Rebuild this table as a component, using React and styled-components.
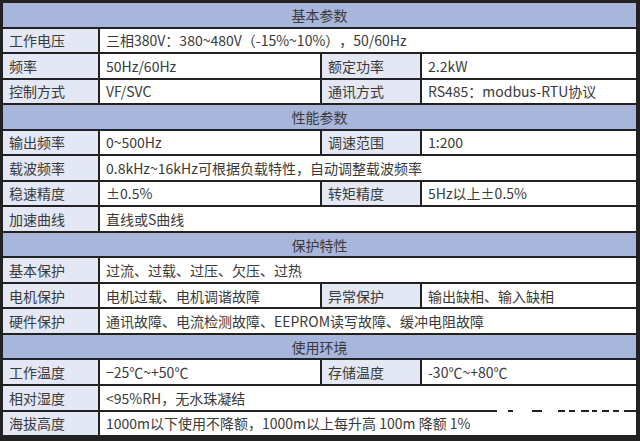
import styled, { createGlobalStyle } from 'styled-components';

const GlobalStyle = createGlobalStyle`
    html, body {
        margin: 0;
        padding: 0;
        background: #222;
    }
    body {
        font-family: "Noto Sans CJK SC", "Noto Sans", sans-serif;
        text-spacing-trim: space-all;
    }
`;

const sections = [
    {
        title: '基本参数',
        rows: [
            ['工作电压', '三相380V：380~480V（-15%~10%），50/60Hz'],
            ['频率', '50Hz/60Hz', '额定功率', '2.2kW'],
            ['控制方式', 'VF/SVC', '通讯方式', 'RS485：modbus-RTU协议'],
        ],
    },
    {
        title: '性能参数',
        rows: [
            ['输出频率', '0~500Hz', '调速范围', '1:200'],
            ['载波频率', '0.8kHz~16kHz可根据负载特性，自动调整载波频率'],
            ['稳速精度', '±0.5%', '转矩精度', '5Hz以上±0.5%'],
            ['加速曲线', '直线或S曲线'],
        ],
    },
    {
        title: '保护特性',
        rows: [
            ['基本保护', '过流、过载、过压、欠压、过热'],
            ['电机保护', '电机过载、电机调谐故障', '异常保护', '输出缺相、输入缺相'],
            ['硬件保护', '通讯故障、电流检测故障、EEPROM读写故障、缓冲电阻故障'],
        ],
    },
    {
        title: '使用环境',
        rows: [
            ['工作温度', '−25℃~+50℃', '存储温度', '-30℃~+80℃'],
            ['相对湿度', '<95%RH，无水珠凝结'],
            ['海拔高度', '1000m以下使用不降额，1000m以上每升高 100m 降额 1%'],
        ],
    },
];

function SpecTable() {
    return (
        <Table>
            {sections.map((section) => (
                <Section key={section.title}>
                    <SectionTitle>{section.title}</SectionTitle>
                    {section.rows.map((row) => (
                        <Row key={row[0]} $split={row.length === 4}>
                            {row.map((text, i) => (
                                <Cell key={i} $label={i % 2 === 0}>{text}</Cell>
                            ))}
                        </Row>
                    ))}
                </Section>
            ))}
            <Watermark width="140" height="4" viewBox="0 0 140 4">
                <rect x="0" y="0" width="11" height="4" fill="#fff" />
                <rect x="16" y="0" width="19" height="4" fill="#fff" />
                <rect x="45" y="0" width="16" height="4" fill="#fff" />
                <rect x="68" y="1" width="4" height="3" fill="#fff" />
                <rect x="78" y="1" width="6" height="3" fill="#fff" />
                <rect x="92" y="1" width="3" height="3" fill="#fff" />
                <rect x="100" y="1" width="5" height="3" fill="#fff" />
                <rect x="112" y="1" width="4" height="3" fill="#fff" />
                <rect x="122" y="1" width="5" height="3" fill="#fff" />
            </Watermark>
        </Table>
    );
}

export default function App() {
    return (
        <>
            <GlobalStyle />
            <SpecTable />
        </>
    );
}

const Table = styled.div`
    position: relative;
    box-sizing: border-box;
    width: 640px;
    height: 441px;
    border-style: solid;
    border-color: #222;
    border-width: 3px 4px 6px 3px;
    background: #222;
    display: flex;
    flex-direction: column;
    gap: 2px;
`;

const Section = styled.div`
    display: contents;
`;

const SectionTitle = styled.div`
    flex: 1;
    display: flex;
    align-items: center;
    justify-content: center;
    background: #a9b6dc;
    color: #3a3a3a;
    font-size: 14px;
`;

const Row = styled.div`
    flex: 1;
    display: grid;
    grid-template-columns: ${(p) => (p.$split ? '95px 220px 98px 1fr' : '95px 1fr')};
    gap: 2px;
`;

const Cell = styled.div`
    display: flex;
    align-items: center;
    padding: 0 6px;
    background: ${(p) => (p.$label ? '#e4e7f4' : '#fff')};
    color: #3a3a3a;
    font-size: 14px;
    white-space: nowrap;
    overflow: hidden;
`;

const Watermark = styled.svg`
    position: absolute;
    left: 494px;
    top: 405px;
`;
